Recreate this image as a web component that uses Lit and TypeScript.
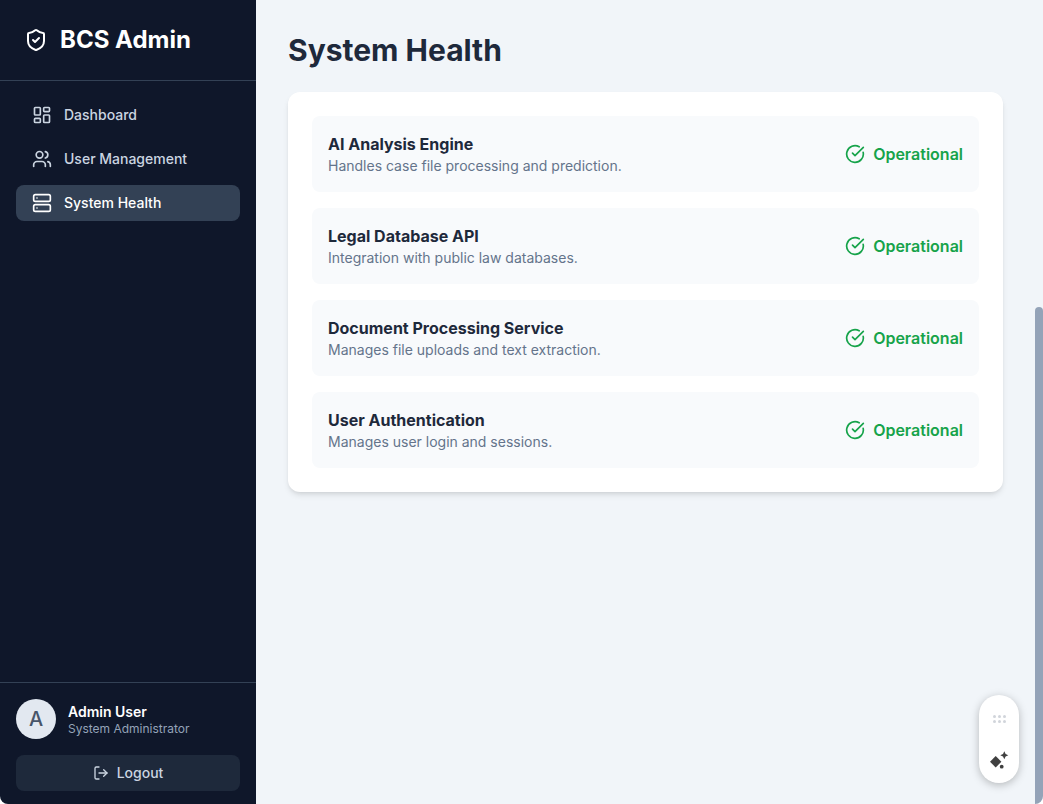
import { LitElement, html, css, svg } from "lit";
import { customElement } from "lit/decorators.js";

const ic = (w: number, body: unknown, sw = 2) => html`<svg class="ic" width=${w} height=${w} viewBox="0 0 24 24" fill="none" stroke="currentColor" stroke-width=${sw} stroke-linecap="round" stroke-linejoin="round">${body}</svg>`;

const shield = svg`<path d="M20 13c0 5-3.5 7.5-7.66 8.95a1 1 0 0 1-.67-.01C7.5 20.5 4 18 4 13V6a1 1 0 0 1 1-1c2 0 4.500-1.200 6.240-2.720a1.170 1.170 0 0 1 1.520 0C14.510 3.810 17 5 19 5a1 1 0 0 1 1 1z"/><path d="m9 12 2 2 4-4"/>`;
const dash = svg`<rect width="7" height="9" x="3" y="3" rx="1"/><rect width="7" height="5" x="14" y="3" rx="1"/><rect width="7" height="9" x="14" y="12" rx="1"/><rect width="7" height="5" x="3" y="16" rx="1"/>`;
const users = svg`<path d="M16 21v-2a4 4 0 0 0-4-4H6a4 4 0 0 0-4 4v2"/><circle cx="9" cy="7" r="4"/><path d="M22 21v-2a4 4 0 0 0-3-3.870"/><path d="M16 3.130a4 4 0 0 1 0 7.750"/>`;
const server = svg`<rect width="20" height="8" x="2" y="2" rx="2" ry="2"/><rect width="20" height="8" x="2" y="14" rx="2" ry="2"/><line x1="6" x2="6.010" y1="6" y2="6"/><line x1="6" x2="6.010" y1="18" y2="18"/>`;
const logout = svg`<path d="M9 21H5a2 2 0 0 1-2-2V5a2 2 0 0 1 2-2h4"/><polyline points="16 17 21 12 16 7"/><line x1="21" x2="9" y1="12" y2="12"/>`;
const check = svg`<path d="M21.800 10A10 10 0 1 1 17 3.340"/><path d="m9 11 3 3L22 4"/>`;

const services = [
  ["AI Analysis Engine", "Handles case file processing and prediction."],
  ["Legal Database API", "Integration with public law databases."],
  ["Document Processing Service", "Manages file uploads and text extraction."],
  ["User Authentication", "Manages user login and sessions."],
];

@customElement("app-root")
export class AppRoot extends LitElement {
  static styles = css`
    :host { display: block; height: 804px; background: #fff; font-family: Inter, "Liberation Sans", sans-serif; }
    * { box-sizing: border-box; }
    .ic { display: block; flex: none; }
    .app { position: relative; display: flex; height: 804px; overflow: hidden; background: #f1f5f9; border-radius: 0 0 8px 8px; }
    .side { width: 256px; flex: none; display: flex; flex-direction: column; background: #0f172a; color: #cbd5e1; }
    .brand { height: 81px; flex: none; display: flex; align-items: center; gap: 12px; padding: 0 24px; border-bottom: 1px solid #334155; color: #fff; }
    .brand span { font-size: 24px; line-height: 32px; font-weight: 700; }
    .nav { flex: 1; display: flex; flex-direction: column; gap: 8px; padding: 16px; }
    .item { height: 36px; display: flex; align-items: center; gap: 12px; padding: 0 16px; border-radius: 8px; font-size: 14px; line-height: 20px; font-weight: 500; }
    .item.on { background: #334155; color: #fff; }
    .foot { flex: none; border-top: 1px solid #334155; padding: 16px 16px 13px; }
    .user { display: flex; align-items: center; gap: 12px; margin-bottom: 16px; }
    .av { width: 40px; height: 40px; border-radius: 50%; background: #e2e8f0; color: #475569; display: flex; align-items: center; justify-content: center; font-size: 20px; font-weight: 500; }
    .who { padding-top: 2px; }
    .un { font-size: 14px; line-height: 18px; font-weight: 600; color: #fff; }
    .ur { font-size: 12px; line-height: 16px; color: #94a3b8; }
    .logout { height: 36px; display: flex; align-items: center; justify-content: center; gap: 8px; border-radius: 8px; background: #1e293b; font-size: 14px; line-height: 20px; font-weight: 500; }
    .main { flex: 1; padding: 32px; }
    h1 { margin: 0 0 24px; font-size: 30px; line-height: 36px; font-weight: 700; color: #1e293b; }
    .card { width: 715px; background: #fff; border-radius: 12px; padding: 24px; display: flex; flex-direction: column; gap: 16px; box-shadow: 0 4px 6px -1px rgba(0,0,0,.1), 0 2px 4px -2px rgba(0,0,0,.1); }
    .row { height: 76px; display: flex; align-items: center; justify-content: space-between; padding: 0 16px; border-radius: 8px; background: #f8fafc; }
    .t { font-size: 16px; line-height: 24px; font-weight: 700; color: #1e293b; }
    .d { font-size: 14px; line-height: 20px; color: #64748b; }
    .st { display: flex; align-items: center; gap: 8px; color: #16a34a; font-size: 16px; font-weight: 600; }
    .bar { position: absolute; right: 0; top: 307px; bottom: 0; width: 8px; background: #94a3b8; border-radius: 4px 4px 0 0; }
    .fab { position: absolute; left: 979px; top: 695px; width: 40px; height: 88px; border-radius: 20px; background: #fff; box-shadow: 0 2px 8px rgba(0,0,0,.25); display: flex; flex-direction: column; align-items: center; justify-content: space-between; padding: 20px 0 12px; }
    .grip { display: grid; grid-template-columns: repeat(3, 3px); gap: 2px; }
    .grip i { width: 3px; height: 3px; border-radius: 50%; background: #d1d5db; }
    .spark { color: #404040; }
  `;

  render() {
    return html`<div class="app">
      <aside class="side">
        <div class="brand">${ic(24, shield)}<span>BCS Admin</span></div>
        <nav class="nav">
          <div class="item">${ic(20, dash)}Dashboard</div>
          <div class="item">${ic(20, users)}User Management</div>
          <div class="item on">${ic(20, server)}System Health</div>
        </nav>
        <div class="foot">
          <div class="user"><div class="av">A</div><div class="who"><div class="un">Admin User</div><div class="ur">System Administrator</div></div></div>
          <div class="logout">${ic(16, logout)}Logout</div>
        </div>
      </aside>
      <main class="main">
        <h1>System Health</h1>
        <section class="card">
          ${services.map(([t, d]) => html`<div class="row"><div><div class="t">${t}</div><div class="d">${d}</div></div><div class="st">${ic(20, check)}Operational</div></div>`)}
        </section>
      </main>
      <div class="bar"></div>
      <div class="fab">
        <div class="grip">${[0,1,2,3,4,5].map(() => html`<i></i>`)}</div>
        <svg class="spark" width="20" height="20" viewBox="0 0 20 20" fill="currentColor"><path d="M6.700 5 12.400 10.700 6.700 16.400 1 10.700z"/><path d="M15.300 0.300 16.600 3 19.300 4.300 16.600 5.600 15.300 8.300 14 5.600 11.300 4.300 14 3z"/><circle cx="12.700" cy="15.700" r="1.900"/></svg>
      </div>
    </div>`;
  }
}
